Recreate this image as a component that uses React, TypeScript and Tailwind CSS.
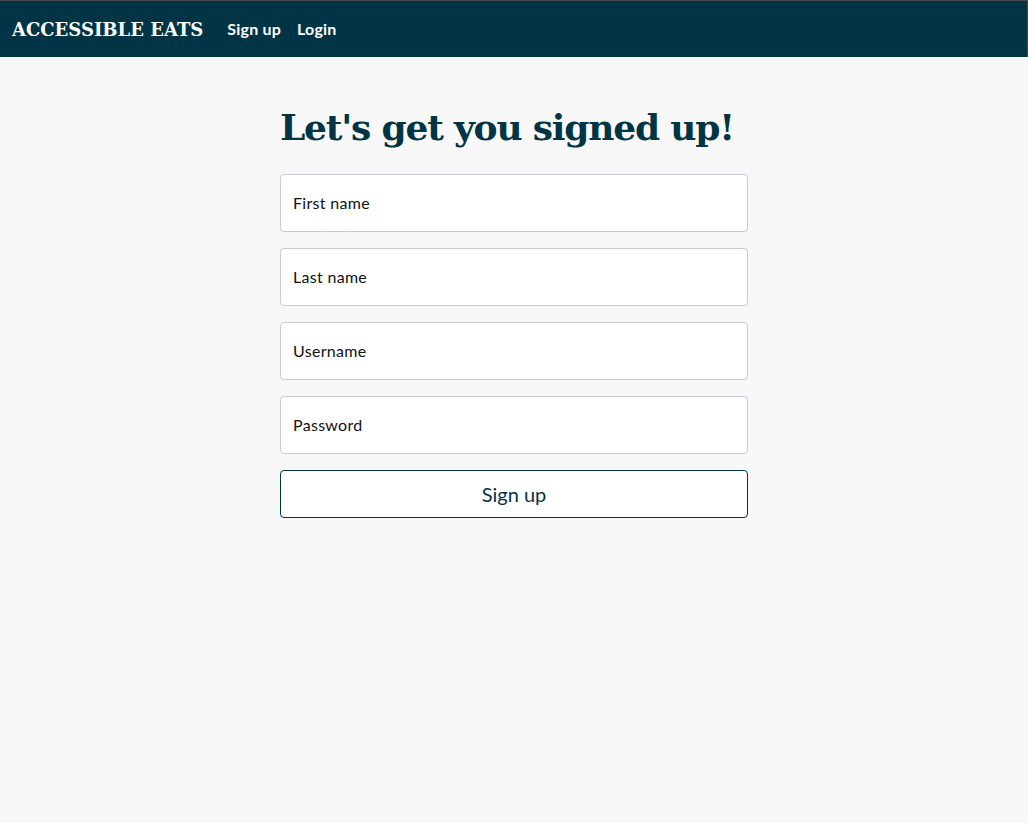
import React from "react";

export default function App() {
  const fields = ["First name", "Last name", "Username", "Password"];
  return (
    <div className="min-h-[823px] bg-[#f8f8f8] font-['Lato',sans-serif]">
      <nav className="h-[57px] bg-[#013444] border-t border-r border-[#4a4a4a] flex items-center px-3">
        <span className="text-white font-bold text-[18px] font-['DejaVu_Serif',serif] tracking-[0px]">
          ACCESSIBLE EATS
        </span>
        <a className="ml-6 text-white font-bold text-[16px] tracking-[0.2px]">Sign up</a>
        <a className="ml-4 text-white font-bold text-[16px] tracking-[0.2px]">Login</a>
      </nav>
      <main className="w-[468px] mx-auto pt-[44px]">
        <h1 className="text-[#013444] font-bold text-[36px] leading-[52px] font-['DejaVu_Serif',serif] tracking-[-1.2px] whitespace-nowrap">
          Let's get you signed up!
        </h1>
        <form className="mt-[21px] flex flex-col gap-4" onSubmit={(e) => e.preventDefault()}>
          {fields.map((f) => (
            <input
              key={f}
              placeholder={f}
              type={f === "Password" ? "password" : "text"}
              className="h-[58px] w-full bg-white border border-[#c4ccd4] rounded-[4px] px-3 pb-[1px] text-[16px] placeholder:text-[#111] text-[#111] outline-none tracking-[0.3px]"
            />
          ))}
          <button className="h-[48px] w-full bg-white border border-[#013444] rounded-[4px] text-[20px] text-[#013444]">
            Sign up
          </button>
        </form>
      </main>
    </div>
  );
}
